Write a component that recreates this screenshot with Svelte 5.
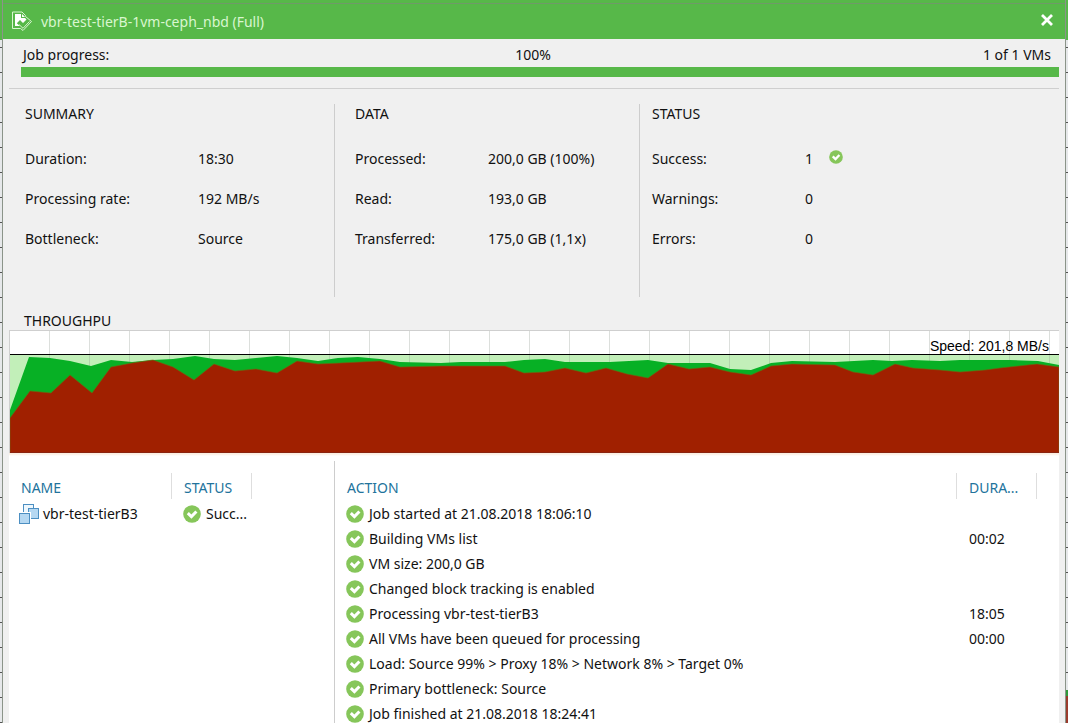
<script>
  const summary = [
    ['Duration:', '18:30'],
    ['Processing rate:', '192 MB/s'],
    ['Bottleneck:', 'Source']
  ];
  const data = [
    ['Processed:', '200,0 GB (100%)'],
    ['Read:', '193,0 GB'],
    ['Transferred:', '175,0 GB (1,1x)']
  ];
  const status = [
    ['Success:', '1'],
    ['Warnings:', '0'],
    ['Errors:', '0']
  ];
  const actions = [
    ['Job started at 21.08.2018 18:06:10', ''],
    ['Building VMs list', '00:02'],
    ['VM size: 200,0 GB', ''],
    ['Changed block tracking is enabled', ''],
    ['Processing vbr-test-tierB3', '18:05'],
    ['All VMs have been queued for processing', '00:00'],
    ['Load: Source 99% > Proxy 18% > Network 8% > Target 0%', ''],
    ['Primary bottleneck: Source', ''],
    ['Job finished at 21.08.2018 18:24:41', '']
  ];

  const read = '0,79 19,26 40,27 60,30 81,35 101,29 122,31 143,29 163,28 185,25 204,28 225,29 246,27 267,25 287,27 308,30 328,27 348,26 370,28 390,31 431,32 451,31 495,31 514,29 535,28 555,31 600,31 638,29 658,32 700,32 720,38 741,39 761,32 782,30 825,31 863,29 882,30 902,29 930,30 950,29 1000,29 1028,30 1049,34';
  const transferred = '0,87 20,60 41,62 60,44 82,62 101,36 122,32 143,29 163,36 184,49 204,33 225,40 246,38 267,42 287,30 308,33 330,32 370,30 390,36 431,35 495,35 514,42 535,41 555,37 576,42 596,37 617,43 638,47 658,33 679,38 700,36 720,41 741,44 761,35 782,33 825,34 843,41 863,44 885,33 903,37 930,39 950,41 975,39 990,37 1027,33 1049,36';
  const gridLines = Array.from({ length: 26 }, (_, i) => 39.5 + i * 40);
</script>

{#snippet tick(small)}
  <svg class="tick" class:small viewBox="0 0 18 18" aria-hidden="true">
    <circle cx="9" cy="9" r="8.8" fill="#86c65a" />
    <path d="M4.8 8.2 8.4 11.6 13.4 6.5" fill="none" stroke="#fff" stroke-width="3" />
  </svg>
{/snippet}

<main class="dialog">
  <header class="titlebar">
    <svg class="logo" viewBox="0 0 22 22" fill="none" aria-hidden="true">
      <path d="M1.5 2H11L14.5 5.5V6.5L20.5 11.5 12 20.5 9.5 18.5H1.5Z" stroke="#d9f6d0" stroke-width="1" />
      <path d="M4 4H10V8H14L15.5 9.5 12 13 9 10 5.8 13.2 9 16H4Z" fill="#fff" />
      <path d="M11 4 14 7H11Z" fill="#fff" />
      <path d="M8 14.5 12 18.3 18.5 11.5" stroke="#d9f6d0" stroke-width="1" />
    </svg>
    <h1>vbr-test-tierB-1vm-ceph_nbd (Full)</h1>
    <button aria-label="Close">
      <svg viewBox="0 0 12 12" aria-hidden="true"><path d="M1 1 11 11M11 1 1 11" stroke="#fff" stroke-width="2.8" /></svg>
    </button>
  </header>

  <section class="progress">
    <div class="labels"><span>Job progress:</span><span class="percent">100%</span><span>1 of 1 VMs</span></div>
    <div class="bar" role="progressbar" aria-label="Job progress" aria-valuenow="100"></div>
  </section>

  <section class="stats">
    <div class="group">
      <h2>SUMMARY</h2>
      <dl>{#each summary as [k, v]}<dt>{k}</dt><dd>{v}</dd>{/each}</dl>
    </div>
    <div class="group data">
      <h2>DATA</h2>
      <dl>{#each data as [k, v]}<dt>{k}</dt><dd>{v}</dd>{/each}</dl>
    </div>
    <div class="group status">
      <h2>STATUS</h2>
      <dl>{#each status as [k, v], i}<dt>{k}</dt><dd>{v}{#if i === 0}{@render tick(true)}{/if}</dd>{/each}</dl>
    </div>
  </section>

  <section class="throughput">
    <h2>THROUGHPU</h2>
    <div class="chart">
      <svg viewBox="0 0 1049 122" preserveAspectRatio="none" aria-hidden="true">
        <rect y="24" width="1049" height="98" fill="#c2efb9" />
        {#each gridLines as x}
          <path d="M{x} 0V40" stroke="#8c968c" stroke-opacity=".3" />
        {/each}
        <polygon points="{read} 1049,122 0,122" fill="#07b025" />
        <polygon points="{transferred} 1049,122 0,122" fill="#a02000" stroke="#6b6a10" stroke-width=".6" />
        <path d="M0 23.5H1049" stroke="#000" />
        <path d="M0 121.5H1049" stroke="#8a2410" />
      </svg>
      <span class="speed">Speed: 201,8 MB/s</span>
    </div>
  </section>

  <section class="lists">
    <div class="pane vms">
      <table>
        <colgroup><col class="name" /><col class="state" /><col /></colgroup>
        <thead><tr><th><span>NAME</span></th><th><span>STATUS</span></th><th><span></span></th></tr></thead>
        <tbody>
          <tr>
            <td>
              <div class="cell vm">
                <svg class="machines" viewBox="0 0 20 20" fill="#b5d8f2" stroke="#4c8fc2" aria-hidden="true">
                  <rect x="4.5" y=".5" width="10" height="9" fill="#eef7fd" />
                  <rect x="9.5" y="4.5" width="10" height="10" />
                  <rect x=".5" y="9.5" width="10" height="10" stroke="#fff" stroke-width="3" />
                  <rect x=".5" y="9.5" width="10" height="10" />
                </svg>
                vbr-test-tierB3
              </div>
            </td>
            <td><div class="cell">{@render tick(false)}Succ...</div></td>
            <td></td>
          </tr>
        </tbody>
      </table>
    </div>
    <div class="pane actions">
      <table>
        <colgroup><col /><col class="duration" /><col class="rest" /></colgroup>
        <thead><tr><th><span>ACTION</span></th><th><span>DURA...</span></th><th><span></span></th></tr></thead>
        <tbody>
          {#each actions as [text, time]}
            <tr><td><div class="cell">{@render tick(false)}{text}</div></td><td>{time}</td><td></td></tr>
          {/each}
        </tbody>
      </table>
    </div>
  </section>
</main>

<style>
  :global(body) {
    margin: 0;
    background:
      linear-gradient(#57b849 40px, transparent 40px),
      linear-gradient(transparent 690px, #2f9a3a 690px 696px, #9a3b2c 696px) right / 2px 100% no-repeat,
      repeating-linear-gradient(#e6e8ea 0 22px, #555 22px 23px, #e6e8ea 23px 25px);
  }
  .dialog {
    box-sizing: border-box;
    height: 100vh;
    margin: 0 2px;
    border: 1px solid #8b9489;
    border-width: 0 1px;
    overflow: hidden;
    display: flex;
    flex-direction: column;
    background: #f0f0f0;
    color: #111;
    font: 14px/20px "Noto Sans", "Open Sans", sans-serif;
  }
  h1, h2 { margin: 0; font-size: 14px; font-weight: 400; }
  .titlebar {
    flex: none;
    box-sizing: border-box;
    height: 39px;
    padding: 0 12px 0 8px;
    display: flex;
    align-items: center;
    background: linear-gradient(#57b849 3px, #6f9a68 3px 4px, #57b849 4px);
  }
  .titlebar h1 { flex: 1; padding: 4px 0 0 8px; color: #d9f6d0; }
  .logo { width: 22px; height: 22px; padding-top: 2px; }
  button { border: 0; padding: 0; background: none; display: flex; }
  button svg { width: 12px; height: 12px; }
  .progress { flex: none; margin: 0 6px; padding: 6px 0 11px 12px; border-bottom: 1px solid #cfcfcf; }
  .labels { display: grid; grid-template-columns: 1fr auto 1fr; padding: 0 8px 2px 2px; }
  .labels span:last-child { text-align: right; }
  .labels .percent { padding-right: 8px; }
  .bar { height: 10px; background: #57b849; }
  .stats { flex: none; display: grid; grid-template-columns: 326fr 305fr 419fr; margin: 15px 6px 0; }
  .group { height: 193px; box-sizing: border-box; border-right: 1px solid #cdcdcd; padding-left: 16px; }
  .group.data { padding-left: 20px; }
  .group.status { border: 0; padding-left: 12px; }
  dl { margin: 15px 0 0; display: grid; grid-template-columns: 173px 1fr; grid-auto-rows: 40px; line-height: 40px; }
  .group.data dl { grid-template-columns: 133px 1fr; }
  .group.status dl { grid-template-columns: 153px 1fr; }
  dd { margin: 0; display: flex; align-items: center; gap: 16px; }
  .tick { flex: none; width: 18px; height: 18px; }
  .tick.small { width: 14px; height: 14px; margin-bottom: 4px; }
  .throughput { flex: none; margin: 14px 6px 0; }
  .throughput h2 { padding-left: 15px; line-height: 19px; }
  .chart { position: relative; height: 122px; border: 1px solid #cfcfcf; border-width: 1px 0 0 1px; background: #fff; }
  .chart svg { display: block; width: 100%; height: 100%; }
  .speed { position: absolute; right: 10px; top: 6px; font: 14px/18px "Liberation Sans", Arial, sans-serif; color: #000; }
  .lists {
    flex: 1;
    min-height: 0;
    margin: 0 6px;
    display: grid;
    grid-template-columns: 326fr 724fr;
    background: linear-gradient(#fbeee2 1px, #fff 3px);
  }
  .pane { margin-top: 8px; padding-top: 12px; }
  .vms { border-right: 1px solid #cdcdcd; }
  table { width: 100%; table-layout: fixed; border-collapse: collapse; }
  th, td { padding: 0 0 0 13px; text-align: left; font-weight: 400; white-space: nowrap; }
  th { height: 28px; color: #22739c; vertical-align: top; padding-left: 0; }
  th span { display: block; height: 26px; line-height: 29px; padding-left: 12px; border-left: 1px solid #dedede; }
  th:first-child span { border-color: transparent; padding-left: 11px; }
  td { height: 25px; }
  td:first-child { padding-left: 12px; }
  .name { width: 162px; }
  .state { width: 80px; }
  .duration { width: 80px; }
  .rest { width: 23px; }
  .cell { display: flex; align-items: center; gap: 5px; margin-left: -1px; }
  .vm { gap: 4px; margin-left: -2px; }
  .machines { width: 20px; height: 20px; }
</style>
